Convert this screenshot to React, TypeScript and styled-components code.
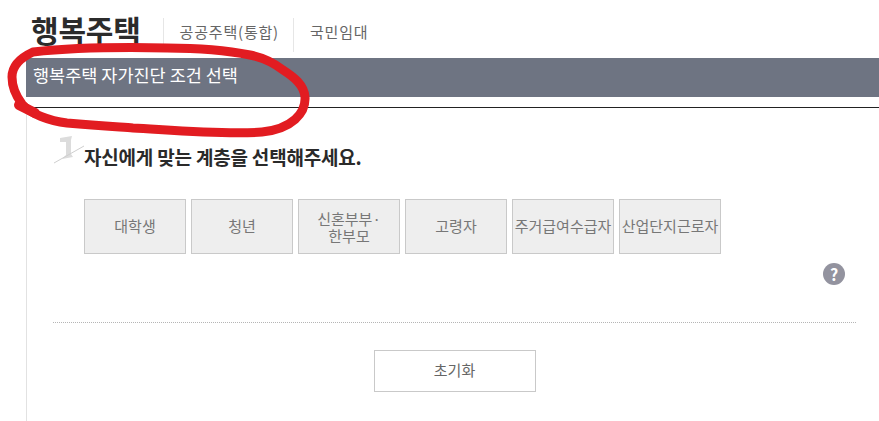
import React from "react";
import styled, { createGlobalStyle } from "styled-components";

const Global = createGlobalStyle`
  html, body { margin: 0; padding: 0; background: #fff; overflow: hidden; }
  body { font-family: "Noto Sans CJK KR", "Noto Sans", sans-serif; }
`;
const Page = styled.div`
  position: relative;
  width: 879px;
  height: 421px;
  overflow: hidden;
`;
const Header = styled.header`
  display: flex;
  align-items: flex-start;
  height: 58px;
  padding-left: 31px;
  box-sizing: border-box;
`;
const Brand = styled.h1`
  margin: 9px 22px 0 0;
  font-size: 30px;
  line-height: 40px;
  font-weight: 700;
  color: #2b2b2b;
  letter-spacing: -0.2px;
`;
const NavItem = styled.a`
  margin-top: 18px;
  height: 34px;
  padding: 0 14px 0 16px;
  border-left: 1px solid #e6e6e6;
  font-size: 15px;
  line-height: 28px;
  letter-spacing: 0.8px;
  color: #666;
`;
const TitleBar = styled.h2`
  margin: 0 0 0 26px;
  height: 39px;
  padding-left: 7px;
  background: #6e7482;
  color: #fff;
  font-size: 17.5px;
  font-weight: 400;
  line-height: 34px;
`;
const Body = styled.main`
  margin: 10px 0 0 26px;
  height: 314px;
  border-top: 1px solid #222;
  border-left: 1px solid #e2e2e2;
  box-sizing: border-box;
`;
const Inner = styled.div`
  position: relative;
  padding: 35px 23px 0 26px;
`;
const StepMark = styled.svg`
  position: absolute;
  left: 26px;
  top: 26px;
`;
const StepTitle = styled.h3`
  margin: 0 0 0 31px;
  font-size: 19px;
  line-height: 28px;
  font-weight: 700;
  color: #2a2a2a;
  letter-spacing: -0.2px;
`;
const Choices = styled.div`
  display: flex;
  gap: 5px;
  margin: 28px 0 0 31px;
`;
const Choice = styled.button<{ $double?: boolean }>`
  width: 102px;
  height: 55px;
  padding: 0 0 ${(p) => (p.$double ? "0" : "3px")};
  border: 1px solid #c9c9c9;
  background: #eeeeee;
  color: #777;
  font-family: inherit;
  font-size: 15px;
  line-height: 17px;
  white-space: pre-line;
`;
const HelpRow = styled.div`
  display: flex;
  justify-content: flex-end;
  margin-top: 9px;
  padding-right: 11px;
`;
const Help = styled.span`
  width: 22px;
  height: 22px;
  border-radius: 50%;
  background: #93939f;
  color: #fff;
  font-size: 16px;
  font-weight: 700;
  line-height: 22px;
  text-align: center;
`;
const Divider = styled.hr`
  margin: 37px 0 0 0;
  border: 0;
  border-top: 1px dotted #b5b5b5;
`;
const Actions = styled.div`
  display: flex;
  justify-content: center;
  margin-top: 27px;
`;
const Reset = styled.button`
  width: 162px;
  height: 42px;
  padding: 0 0 3px;
  border: 1px solid #c9c9c9;
  background: #fff;
  color: #666;
  font-family: inherit;
  font-size: 15px;
`;
const Scribble = styled.svg`
  position: absolute;
  left: 0;
  top: 0;
  pointer-events: none;
`;

const choices = ["대학생", "청년", "신혼부부·\n한부모", "고령자", "주거급여수급자", "산업단지근로자"];

export default function App() {
  return (
    <Page>
      <Global />
      <Header>
        <Brand>행복주택</Brand>
        <NavItem>공공주택(통합)</NavItem>
        <NavItem>국민임대</NavItem>
      </Header>
      <TitleBar>행복주택 자가진단 조건 선택</TitleBar>
      <Body>
        <Inner>
          <StepMark width="32" height="36" viewBox="0 0 32 36">
            <path d="M7 4 L19 2 L18 6 L18 20 L20 23 L9 25 L13 21 L13 8 L7 8 Z" fill="#dcdcdc" />
            <path d="M1 29 L31 12" stroke="#cfcfcf" strokeWidth="1" fill="none" />
          </StepMark>
          <StepTitle>자신에게 맞는 계층을 선택해주세요.</StepTitle>
          <Choices>
            {choices.map((c) => (
              <Choice key={c} $double={c.includes("\n")}>{c}</Choice>
            ))}
          </Choices>
          <HelpRow>
            <Help>?</Help>
          </HelpRow>
          <Divider />
          <Actions>
            <Reset>초기화</Reset>
          </Actions>
        </Inner>
      </Body>
      <Scribble width="879" height="421" viewBox="0 0 879 421">
        <path
          d="M33 52 C20 58 12 66 12 77 C12 88 16 96 22 104 C30 114 50 121 67 123 C100 126 120 127 133 128 C170 130 225 135 262 132 C292 129 306 113 305 97 C304 85 294 77 283 70 C270 60 260 57 250 55 C225 50 195 48 167 48 C120 47 70 48 33 52"
          fill="none"
          stroke="#e21c21"
          strokeWidth="9"
          strokeLinecap="round"
          strokeLinejoin="round"
        />
        <path d="M19 105 L35 113" fill="none" stroke="#e21c21" strokeWidth="10" strokeLinecap="round" />
      </Scribble>
    </Page>
  );
}
